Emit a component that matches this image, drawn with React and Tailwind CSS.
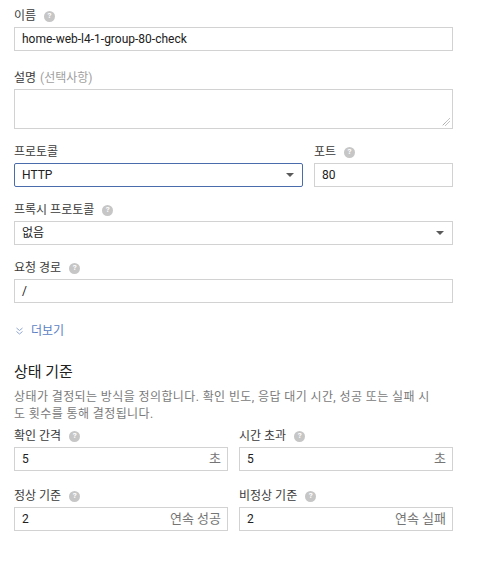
import React from "react";

const font = { fontFamily: 'Roboto, "Noto Sans CJK KR", sans-serif' };

function Help() {
  return (
    <span className="inline-flex items-center justify-center w-[11px] h-[11px] rounded-full bg-[#c6c6c6] text-white text-[8px] font-bold leading-none ml-[8px]">
      ?
    </span>
  );
}

function Label({ children, help }) {
  return (
    <div className="flex items-center h-[14px] text-[12px] text-[#3a3a3a] leading-none mb-[4px]">
      <span>{children}</span>
      {help && <Help />}
    </div>
  );
}

function Input({ value, suffix }) {
  return (
    <div className="flex items-center h-[24px] bg-white border border-[#d2d2d2] pl-[7px] pr-[6px] text-[12px] text-[#212121]">
      <span className="flex-1">{value}</span>
      {suffix && <span className="text-[#757575] text-[13px]">{suffix}</span>}
    </div>
  );
}

function Select({ value, focused }) {
  return (
    <div
      className={
        "flex items-center h-[24px] bg-white border pl-[7px] pr-[8px] text-[12px] text-[#212121] " +
        (focused ? "border-[#4a6cad] rounded-[2px]" : "border-[#d2d2d2]")
      }
    >
      <span className="flex-1">{value}</span>
      <span className="w-0 h-0 border-l-[4px] border-r-[4px] border-t-[4px] border-l-transparent border-r-transparent border-t-[#5a5a5a]" />
    </div>
  );
}

export default function App() {
  return (
    <div className="w-[494px] h-[564px] bg-white" style={font}>
      <div className="w-[439px] ml-[14px] pt-[9px] flex flex-col">
        <Label help>이름</Label>
        <Input value="home-web-l4-1-group-80-check" />

        <div className="mt-[20px]">
          <div className="flex items-center h-[14px] text-[12px] text-[#3a3a3a] leading-none mb-[4px]">
            <span>설명</span>
            <span className="text-[#a0a0a0] ml-[4px]">(선택사항)</span>
          </div>
          <div className="relative h-[40px] border border-[#d2d2d2] bg-white">
            <svg className="absolute right-[2px] bottom-[2px]" width="8" height="8" viewBox="0 0 8 8">
              <path d="M7.5 0.5 L0.5 7.5 M7.5 3.5 L3.5 7.5" stroke="#8a8a8a" strokeWidth="1" strokeDasharray="1 0.6" />
            </svg>
          </div>
        </div>

        <div className="mt-[16px] flex gap-[11px]">
          <div className="w-[289px]">
            <Label>프로토콜</Label>
            <Select value="HTTP" focused />
          </div>
          <div className="flex-1">
            <Label help>포트</Label>
            <Input value="80" />
          </div>
        </div>

        <div className="mt-[16px]">
          <Label help>프록시 프로토콜</Label>
          <Select value="없음" />
        </div>

        <div className="mt-[16px]">
          <Label help>요청 경로</Label>
          <Input value="/" />
        </div>

        <div className="mt-[21px] flex items-center text-[12px] text-[#5a7fc4] h-[14px] leading-none">
          <svg width="7" height="8" viewBox="0 0 7 8" className="mr-[8px] ml-[2px]">
            <path d="M0.5 1 L3.5 3.5 L6.5 1 M0.5 4.5 L3.5 7 L6.5 4.5" stroke="#8ea5d2" strokeWidth="1" fill="none" />
          </svg>
          <span>더보기</span>
        </div>

        <div className="mt-[25px] text-[15px] text-[#212121] leading-none h-[18px] flex items-center">
          상태 기준
        </div>
        <div className="mt-[8px] text-[12px] text-[#7a7a7a] leading-[17px] tracking-[0.4px] w-[420px]">
          상태가 결정되는 방식을 정의합니다. 확인 빈도, 응답 대기 시간, 성공 또는 실패 시도 횟수를 통해 결정됩니다.
        </div>

        <div className="mt-[6px] grid grid-cols-2 gap-x-[11px] gap-y-[18px]">
          <div>
            <Label help>확인 간격</Label>
            <Input value="5" suffix="초" />
          </div>
          <div>
            <Label help>시간 초과</Label>
            <Input value="5" suffix="초" />
          </div>
          <div>
            <Label help>정상 기준</Label>
            <Input value="2" suffix="연속 성공" />
          </div>
          <div>
            <Label help>비정상 기준</Label>
            <Input value="2" suffix="연속 실패" />
          </div>
        </div>
      </div>
    </div>
  );
}
